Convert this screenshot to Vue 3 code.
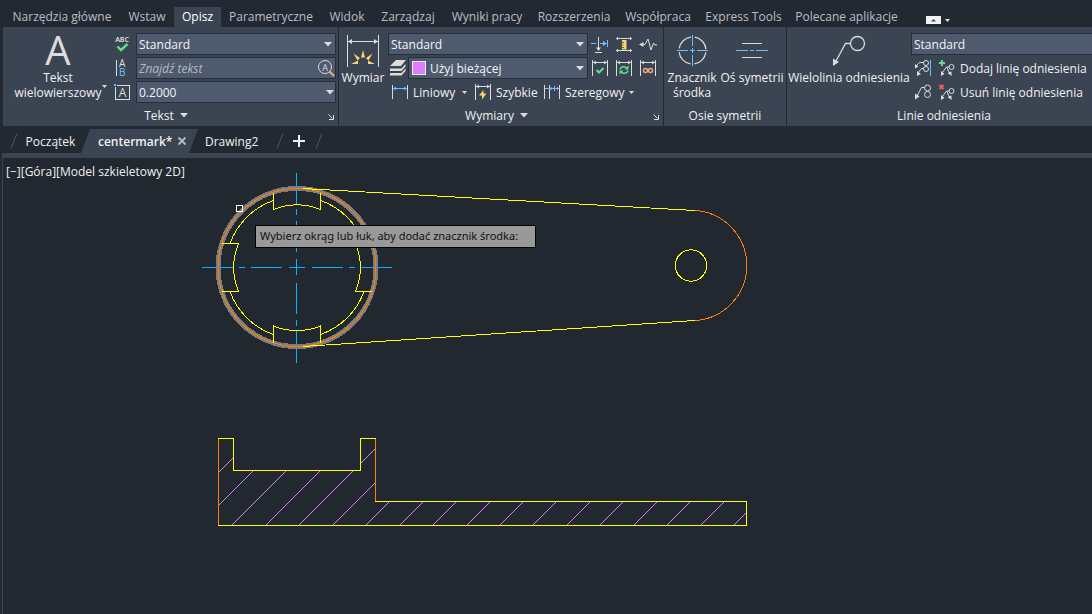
<script setup>
const tabs = ['Narzędzia główne', 'Wstaw', 'Opisz', 'Parametryczne', 'Widok', 'Zarządzaj', 'Wyniki pracy', 'Rozszerzenia', 'Współpraca', 'Express Tools', 'Polecane aplikacje']
const active = 'Opisz'

// 45 degree section hatch, one line every 33.45 units along the base
const base = 525.5
const hatch = Array.from({ length: 18 }, (_, k) => {
  const x = Math.round(690 + k * 33.45 - base) + 0.5
  return { x1: x, y1: base, x2: x + 90, y2: base - 90 }
})
</script>

<template>
  <div class="app">
    <nav class="tabs" aria-label="Wstążka">
      <button v-for="t in tabs" :key="t" class="tab" :class="{ on: t === active }">{{ t }}</button>
      <button class="mini" aria-label="Minimalizuj">
        <svg width="26" height="10" viewBox="0 0 26 10"><rect y="1" width="15" height="8" fill="#f2f2f2" /><path d="M5 6.500 7.500 4 10 6.500z" fill="#3b4453" /><path d="M19 4h5l-2.500 3z" fill="#e8e8e8" /></svg>
      </button>
    </nav>

    <section class="ribbon">
      <div class="panel p-text">
        <div class="body">
          <button class="big">
            <svg width="40" height="36" viewBox="0 0 40 36"><text x="20" y="32" text-anchor="middle" font-size="40" fill="#dcdcdc">A</text></svg>
            <span>Tekst<br>wielowierszowy</span>
            <svg class="drop" width="5" height="3" viewBox="0 0 5 3"><path d="M0 0h5L2.500 3z" fill="#dcdcdc" /></svg>
          </button>
          <div class="stack icons">
            <button class="ic" aria-label="Pisownia">
              <svg width="18" height="18" viewBox="0 0 18 18"><text x="9" y="7" text-anchor="middle" font-size="7" font-weight="600" fill="#e4e4e4">ABC</text><path d="M4.500 11.500 8 15l6.500-6" fill="none" stroke="#5fe08a" stroke-width="2.400" /></svg>
            </button>
            <button class="ic" aria-label="Wyrównaj tekst">
              <svg width="18" height="18" viewBox="0 0 18 18"><path d="M3.500 1v16" stroke="#dcdcdc" /><text x="6" y="8" font-size="10" fill="#dcdcdc">A</text><text x="6" y="17" font-size="10" fill="#6cc0ff">B</text></svg>
            </button>
            <button class="ic" aria-label="Wysokość tekstu">
              <svg width="18" height="18" viewBox="0 0 18 18"><rect x="2.500" y="2.500" width="14" height="14" fill="none" stroke="#dcdcdc" /><rect x="0" y="0" width="4" height="4" fill="#3b4453" /><rect x="1" y="1" width="2" height="2" fill="#6cc0ff" /><text x="9.500" y="14" text-anchor="middle" font-size="12" fill="#dcdcdc">A</text></svg>
            </button>
          </div>
          <div class="stack fields">
            <label class="field"><select aria-label="Styl tekstu"><option>Standard</option></select><svg class="arr" width="8" height="5" viewBox="0 0 8 5"><path d="M0 0h8L4 4.500z" fill="#dcdcdc" /></svg></label>
            <label class="field"><input class="find" type="text" placeholder="Znajdź tekst" aria-label="Znajdź tekst"><svg class="lens" width="18" height="18" viewBox="0 0 18 18"><circle cx="8" cy="8" r="6.500" fill="none" stroke="#dcdcdc" /><text x="8" y="11.500" text-anchor="middle" font-size="9" fill="#dcdcdc">A</text><path d="m12.500 12.500 4.500 4.500" stroke="#e6b36a" stroke-width="2" /></svg></label>
            <label class="field"><input type="text" value="0.2000" aria-label="Wysokość"><svg class="arr end" width="8" height="5" viewBox="0 0 8 5"><path d="M0 0h8L4 4.500z" fill="#dcdcdc" /></svg></label>
          </div>
        </div>
        <div class="foot">
          <button>Tekst<svg width="8" height="5" viewBox="0 0 8 5"><path d="M0 0h8L4 4.500z" fill="#dcdcdc" /></svg></button>
          <button class="launch" aria-label="Styl tekstu"><svg width="6" height="6" viewBox="0 0 6 6"><path d="M.5.500 4.500 4.500M5.500 1v4.500H1" fill="none" stroke="#dcdcdc" /></svg></button>
        </div>
      </div>

      <div class="panel p-dim">
        <div class="body">
          <button class="big">
            <svg width="34" height="36" viewBox="0 0 34 36"><g fill="none" stroke="#dcdcdc"><path d="M1.500 2v32M32.500 2v32M2 8.500h30" /></g><path d="M2 8.500 6 6v5zM32 8.500 28 6v5z" fill="#dcdcdc" /><g fill="#ffd070"><path d="m17 17 2 7.500h-4zM7.500 20.500l6.500 4.500-2.500 2.500zM26.500 20.500 20 25l2.500 2.500zM5 31l7-3.500V31zM29 31l-7-3.500V31z" /></g></svg>
            <span>Wymiar</span>
          </button>
          <div class="dim">
            <div class="dimtop">
              <div class="stack fields">
                <label class="field"><select aria-label="Styl wymiarowania"><option>Standard</option></select><svg class="arr" width="8" height="5" viewBox="0 0 8 5"><path d="M0 0h8L4 4.500z" fill="#dcdcdc" /></svg></label>
                <div class="layer">
                  <svg width="16" height="16" viewBox="0 0 16 16"><g fill="#dcdcdc"><path d="M6 0h10l-5 6H0z" /><path d="M0 8.500h11.500L15.500 4v2.500l-4 4.500H0zM0 13h11.500l4-4.500V11l-4 4.500H0z" /></g></svg>
                  <label class="field"><i class="swatch"></i><select class="sw" aria-label="Warstwa wymiarów"><option>Użyj bieżącej</option></select><svg class="arr" width="8" height="5" viewBox="0 0 8 5"><path d="M0 0h8L4 4.500z" fill="#dcdcdc" /></svg></label>
                </div>
              </div>
              <div class="six">
                <button class="ic" aria-label="Przerwij"><svg width="18" height="18" viewBox="0 0 18 18"><path d="M0 8.500h5.500M9 8.500h4M16.500 5v7" stroke="#6cc0ff" /><path d="M12 6l4 2.500-4 2.500z" fill="#6cc0ff" /><path d="M7.500 2v11M4 17.500h7" stroke="#dcdcdc" /><path d="M5 12.500h5l-2.500 3.500z" fill="#dcdcdc" /></svg></button>
                <button class="ic" aria-label="Dopasuj odstęp"><svg width="18" height="18" viewBox="0 0 18 18"><path d="M1 3.500h16M1 15.500h16M2.500 2v3M15.500 2v3M2.500 14v3M15.500 14v3" stroke="#dcdcdc" /><path d="M7 5h4.500v9.500H7z" fill="#ffd070" /><path d="M6 7.500h3M6 10h2.500M6 12.500h3" stroke="#6b5a30" /></svg></button>
                <button class="ic" aria-label="Linia zygzakowa"><svg width="18" height="18" viewBox="0 0 18 18"><path d="M2 9.500h4l3-5.500 3 11 2.500-7 1.500 2H18" fill="none" stroke="#dcdcdc" /><path d="M0 9.500 4.500 7v5z" fill="#dcdcdc" /></svg></button>
                <button class="ic" aria-label="Kontrola"><svg width="18" height="18" viewBox="0 0 18 18"><path d="M1.500 1v16M16.500 1v16M2 3.500h14M5 2 3 3.500 5 5M13 2l2 1.500L13 5" fill="none" stroke="#dcdcdc" /><path d="m5.500 11 2.500 2.500 4.500-4.500" fill="none" stroke="#5fe08a" stroke-width="2" /></svg></button>
                <button class="ic" aria-label="Aktualizuj"><svg width="18" height="18" viewBox="0 0 18 18"><path d="M1.500 1v16M16.500 1v16M2 3.500h14M5 2 3 3.500 5 5M13 2l2 1.500L13 5" fill="none" stroke="#dcdcdc" /><path d="M5 10.500A4 3.500 0 0 1 12 9M13 11.500a4 3.500 0 0 1-7 1.500" fill="none" stroke="#5fe08a" stroke-width="1.500" /><path d="M13.500 6.500V10.500H9.500zM4.500 15.500V11.500H8.500z" fill="#5fe08a" /></svg></button>
                <button class="ic" aria-label="Skojarz"><svg width="18" height="18" viewBox="0 0 18 18"><path d="M1.500 1v16M16.500 1v16M2 3.500h14M5 2 3 3.500 5 5M13 2l2 1.500L13 5" fill="none" stroke="#dcdcdc" /><g fill="none" stroke="#f0a878" stroke-width="1.500"><circle cx="6.500" cy="11.500" r="2" /><circle cx="11.500" cy="11.500" r="2" /></g></svg></button>
              </div>
            </div>
            <div class="dimrow">
              <button><svg width="18" height="18" viewBox="0 0 18 18"><path d="M1.500 2v14M16.500 2v14" stroke="#dcdcdc" /><path d="M2 5.500h14M5 4 3 5.500 5 7M13 4l2 1.500L13 7" fill="none" stroke="#6cc0ff" /></svg><span class="w-lin">Liniowy</span><svg class="sm" width="5" height="3" viewBox="0 0 5 3"><path d="M0 0h5L2.500 3z" fill="#dcdcdc" /></svg></button>
              <button><svg width="18" height="18" viewBox="0 0 18 18"><path d="M1.500 1v16M16.500 1v16M2 3.500h14M5 2 3 3.500 5 5M13 2l2 1.500L13 5" fill="none" stroke="#dcdcdc" /><path d="M9.500 7v3.500H12.500L8 16.500V12.500H5z" fill="#ffd070" /></svg><span class="w-quick">Szybkie</span></button>
              <button><svg width="18" height="18" viewBox="0 0 18 18"><path d="M1.500 2v14M6.500 2v14M16.500 2v14" stroke="#dcdcdc" /><path d="M2 5.500h14M8.500 4 7.500 5.500l1 1.500M11.500 3v5M14 4l1.500 1.500L14 7" fill="none" stroke="#6cc0ff" /></svg><span class="w-ser">Szeregowy</span><svg class="sm" width="5" height="3" viewBox="0 0 5 3"><path d="M0 0h5L2.500 3z" fill="#dcdcdc" /></svg></button>
            </div>
          </div>
        </div>
        <div class="foot">
          <button>Wymiary<svg width="8" height="5" viewBox="0 0 8 5"><path d="M0 0h8L4 4.500z" fill="#dcdcdc" /></svg></button>
          <button class="launch" aria-label="Styl wymiarowania"><svg width="6" height="6" viewBox="0 0 6 6"><path d="M.5.500 4.500 4.500M5.500 1v4.500H1" fill="none" stroke="#dcdcdc" /></svg></button>
        </div>
      </div>

      <div class="panel p-axis">
        <div class="body">
          <button class="big">
            <svg width="36" height="36" viewBox="0 0 36 36"><circle cx="18.500" cy="17.500" r="13.500" fill="none" stroke="#dcdcdc" stroke-width="1.200" stroke-dasharray="17.200 4" stroke-dashoffset="-2" /><path d="M18.500 2v11M18.500 22v11M18.500 15v5M3 17.500h11M23 17.500h11M16 17.500h5" stroke="#6cc0ff" /></svg>
            <span>Znacznik<br>środka</span>
          </button>
          <button class="big">
            <svg width="36" height="36" viewBox="0 0 36 36"><path d="M8 10.500h20M8 24.500h20" stroke="#dcdcdc" /><path d="M2 17.500h12M16 17.500h4M22 17.500h12" stroke="#6cc0ff" /></svg>
            <span>Oś symetrii</span>
          </button>
        </div>
        <div class="foot"><span>Osie symetrii</span></div>
      </div>

      <div class="panel p-lead">
        <div class="body">
          <button class="big">
            <svg width="36" height="36" viewBox="0 0 36 36"><circle cx="26.500" cy="10.500" r="7" fill="none" stroke="#dcdcdc" stroke-width="1.300" /><path d="M19.500 10.500h-5L4.500 29" fill="none" stroke="#dcdcdc" stroke-width="1.300" /><path d="M2 33V25.500l6 3.500z" fill="#dcdcdc" /></svg>
            <span>Wielolinia odniesienia</span>
          </button>
          <div class="lead">
            <label class="field"><select aria-label="Styl wielolinii"><option>Standard</option></select></label>
            <div class="leadrow">
              <button class="ic" aria-label="Wyrównaj"><svg width="18" height="18" viewBox="0 0 18 18"><g fill="none" stroke="#dcdcdc"><circle cx="12" cy="4" r="2.500" /><circle cx="12" cy="10" r="2.500" /><path d="M9.500 3.500H5.500L2 7M9.500 9.500H7.500L4 14" /></g><path d="M1 9.500V5l3.500 2.500zM3 17v-5l4 3z" fill="#dcdcdc" /><path d="M16.500 1v16" stroke="#6cc0ff" /></svg></button>
              <button class="txt"><svg width="18" height="18" viewBox="0 0 18 18"><path d="M3 1v6M0 4h6" stroke="#5fe08a" stroke-width="2" /><g fill="none" stroke="#dcdcdc"><circle cx="12.500" cy="8" r="2.500" /><path d="M10 8H7.500L3 14M8 8.500l2.500 6" /></g><path d="M2 17v-5l3.500 3zM8.500 14l4-1.500V17z" fill="#dcdcdc" /></svg><span>Dodaj linię odniesienia</span></button>
            </div>
            <div class="leadrow">
              <button class="ic" aria-label="Zbierz"><svg width="18" height="18" viewBox="0 0 18 18"><g fill="none" stroke="#dcdcdc"><circle cx="13.500" cy="5" r="3" /><circle cx="13.500" cy="11.500" r="3" /><path d="M10.500 4.500H7.500L3 13" /></g><path d="M1 16.500v-6l4.500 3z" fill="#dcdcdc" /></svg></button>
              <button class="txt"><svg width="18" height="18" viewBox="0 0 18 18"><path d="m.5 2 4 4M4.500 2l-4 4" stroke="#ef5b62" stroke-width="2" /><g fill="none" stroke="#dcdcdc"><circle cx="12.500" cy="8" r="2.500" /><path d="M10 8H7.500L3 14M8 8.500l2.500 6" /></g><path d="M2 17v-5l3.500 3zM8.500 14l4-1.500V17z" fill="#dcdcdc" /></svg><span>Usuń linię odniesienia</span></button>
            </div>
          </div>
        </div>
        <div class="foot"><span>Linie odniesienia</span></div>
      </div>
    </section>

    <nav class="docs" aria-label="Rysunki">
      <svg class="slash" width="8" height="16" viewBox="0 0 8 16"><path d="M1 15.500 7 .500" stroke="#4c5667" /></svg>
      <button class="doc start">Początek</button>
      <button class="doc cur"><b>centermark*</b><svg width="8" height="8" viewBox="0 0 8 8"><path d="m.5.500 7 7M7.500.500l-7 7" stroke="#b4bac4" stroke-width="1.800" /></svg></button>
      <button class="doc draw">Drawing2</button>
      <svg class="slash" width="8" height="16" viewBox="0 0 8 16"><path d="M1 15.500 7 .500" stroke="#4c5667" /></svg>
      <button class="add" aria-label="Nowy rysunek"><svg width="12" height="12" viewBox="0 0 12 12"><path d="M6 0v12M0 6h12" stroke="#f0f0f0" stroke-width="2" /></svg></button>
      <svg class="slash" width="8" height="16" viewBox="0 0 8 16"><path d="M1 15.500 7 .500" stroke="#4c5667" /></svg>
    </nav>

    <main class="view">
      <svg class="drawing" shape-rendering="crispEdges" fill="none" stroke="#ffff00" role="img" aria-label="Rysunek centermark">
        <defs>
          <clipPath id="section"><path d="M218.500 438.500H233.500V470.500H360.500V438.500H375.500V501.500H746.500V525.500H218.500z" /></clipPath>
        </defs>
        <g transform="translate(-3 -158)">
          <g stroke="#00b4ff">
            <path d="M202 267.500h32M239 267.500h6M251 267.500h31M289 267.500h16M312 267.500h31M349 267.500h6M361 267.500h31" />
            <path d="M296.500 173v31M296.500 209v6M296.500 221v31M296.500 259v16M296.500 283v31M296.500 320v6M296.500 331v32" />
          </g>
          <circle cx="297" cy="267.500" r="79" stroke="#7b7d80" stroke-width="5" />
          <circle cx="297" cy="267.500" r="79" stroke="#ff7f00" />
          <path d="M273.500 200.500A71 71 0 0 0 230 243.500M230 291.500A71 71 0 0 0 273.500 334.500M320.500 334.500A71 71 0 0 0 364 291.500M320.500 200.500A71 71 0 0 1 364 243.500" />
          <path d="M273.500 192.500V209.500A63.500 63.500 0 0 1 320.500 209.500V192.500M273.500 342.500V326A63.500 63.500 0 0 0 320.500 326V342.500" />
          <path d="M222 243.500H238.500A63.500 63.500 0 0 0 238.500 291.500H222M372 243.500H355.500A63.500 63.500 0 0 1 355.500 291.500H372" />
          <path d="M303 188.500 695 210.500M303 346.500 695 320.500" />
          <path d="M695 210.500A55.100 55.100 0 0 1 695 320.500" stroke="#ff7f00" />
          <circle cx="691" cy="265.500" r="15.700" />
          <rect x="236.500" y="205.500" width="6" height="6" stroke="#ffffff" />
          <g clip-path="url(#section)" stroke="#e07cff"><line v-for="(h, i) in hatch" :key="i" v-bind="h" /></g>
          <path d="M218 438.500H233.500V470.500H360.500V438.500H376M375 501.500H746.500V525.500H218" />
          <path d="M218.500 439V525M375.500 439V501" stroke="#ff7f00" />
        </g>
      </svg>
      <p class="label">[−][Góra][Model szkieletowy 2D]</p>
      <div class="tip">Wybierz okrąg lub łuk, aby dodać znacznik środka:</div>
    </main>
  </div>
</template>

<style>
body { margin: 0; background: #212830; }
</style>

<style scoped>
.app { min-height: 100vh; display: flex; flex-direction: column; overflow: hidden; background: #222933; color: #f0f0f0; font: 12px/15px "Open Sans", "Noto Sans", sans-serif; }
button { margin: 0; padding: 0; border: 0; background: none; color: inherit; font: inherit; white-space: nowrap; }
svg { display: block; flex: none; overflow: visible; }
.tabs { display: grid; grid-template-columns: 114px 56px 46px 100px 52px 70px 88px 86px 82px 89px 117px 60px; height: 20px; padding: 7px 0 0 5px; }
.tab { padding-bottom: 1px; color: #b9bec6; text-align: center; display: flex; justify-content: center; align-items: center; }
.tab.on { background: #3b4453; color: #fff; margin-left: -1px; }
.mini { padding: 5px 0 0 21px; }
.ribbon { display: flex; height: 99px; margin-left: 3px; background: #3b4453; }
.panel { display: flex; flex-direction: column; box-sizing: border-box; flex: none; border-right: 1px solid #222933; }
.p-text { width: 336px; }
.p-dim { width: 325px; }
.p-axis { width: 123px; }
.p-lead { flex: 1 0 300px; border-right: 0; min-width: 0; }
.body { display: flex; padding-top: 6px; height: 70px; }
.big { position: relative; display: flex; flex-direction: column; align-items: center; text-align: center; }
.big span { margin-top: 1px; }
.p-text .big { width: 110px; }
.drop { position: absolute; right: 6px; top: 52px; }
.p-dim .big { width: 51px; }
.p-axis .big { width: 56px; }
.p-axis .big + .big { width: 64px; }
.p-lead .big { width: 124px; }
.stack { display: flex; flex-direction: column; gap: 2px; }
.icons { width: 23px; }
.ic { display: flex; align-items: center; height: 22px; }
.fields { width: 200px; }
.field { position: relative; display: flex; align-items: center; box-sizing: border-box; height: 22px; border: 1px solid #272e39; background: #4e5a6e; flex: 1 1 auto; }
.stack > .field { flex: none; }
.field select, .field input { appearance: none; box-sizing: border-box; width: 100%; height: 20px; margin: 0; padding: 0 20px 0 2px; border: 0; outline: 0; background: none; color: #f4f4f4; font: inherit; }
.field .sw { padding-left: 21px; }
.find::placeholder { color: #b4bac4; font-style: italic; opacity: 1; }
.arr { position: absolute; right: 3px; top: 8px; pointer-events: none; }
.arr.end { right: 1px; }
.lens { position: absolute; right: 0; top: 1px; }
.swatch { position: absolute; left: 3px; top: 3px; width: 12px; height: 12px; border: 1px solid #eee; background: #e07cff; }
.foot { position: relative; display: flex; justify-content: center; align-items: center; height: 20px; padding-top: 2px; }
.p-text .foot, .p-dim .foot { padding-right: 9px; }
.p-lead .foot { padding-left: 9px; }
.foot button { display: flex; align-items: center; gap: 6px; }
.foot .launch { position: absolute; right: 4px; top: 11px; }
.dim { flex: 1; display: flex; flex-direction: column; gap: 2px; padding-left: 1px; }
.dimtop { display: flex; gap: 3px; }
.layer { display: flex; align-items: center; gap: 2px; padding-left: 2px; }
.six { display: grid; grid-template-columns: 24px 24px 24px; row-gap: 2px; }
.dimrow { display: flex; height: 22px; padding-left: 3px; }
.dimrow button { display: flex; align-items: center; text-align: left; gap: 4px; }
.w-lin { width: 45px; }
.w-quick { width: 47px; }
.w-ser { width: 60px; }
.dimrow .sm { margin-right: 7px; }
.lead { flex: 1; display: flex; flex-direction: column; gap: 2px; min-width: 0; }
.lead > .field { flex: none; border-right: 0; }
.leadrow { display: flex; height: 22px; gap: 7px; padding-left: 3px; }
.txt { display: flex; align-items: center; gap: 3px; }
.docs { display: flex; align-items: center; height: 27px; padding: 0 0 0 10px; }
.doc { height: 24px; margin-top: 3px; }
.start { width: 63px; padding-left: 2px; text-align: center; box-sizing: border-box; }
.slash { margin-top: 2px; }
.cur { display: flex; align-items: center; justify-content: space-between; width: 117px; padding: 0 12px 0 17px; background: #3b4453; clip-path: polygon(9px 0, 117px 0, 108px 100%, 0 100%); box-sizing: border-box; }
.cur b { font-weight: 600; }
.draw { width: 78px; text-align: left; padding-left: 7px; box-sizing: border-box; }
.add { margin: 3px 10px 0 9px; }
.view { position: relative; flex: 1; min-height: 456px; display: flex; margin-left: 2px; border-top: 5px solid #3b4453; border-left: 1px solid #3b4453; background: #212830; box-sizing: border-box; }
.drawing { position: absolute; inset: 0; width: 100%; height: 100%; }
.label { position: relative; margin: 6px 0 0 3px; align-self: flex-start; }
.tip { position: absolute; left: 252px; top: 67px; box-sizing: border-box; min-width: 281px; height: 23px; padding: 2px 4px; border: 1px solid #000; background: #999; color: #111; font-family: "Noto Sans", sans-serif; font-size: 11px; white-space: nowrap; }
</style>
